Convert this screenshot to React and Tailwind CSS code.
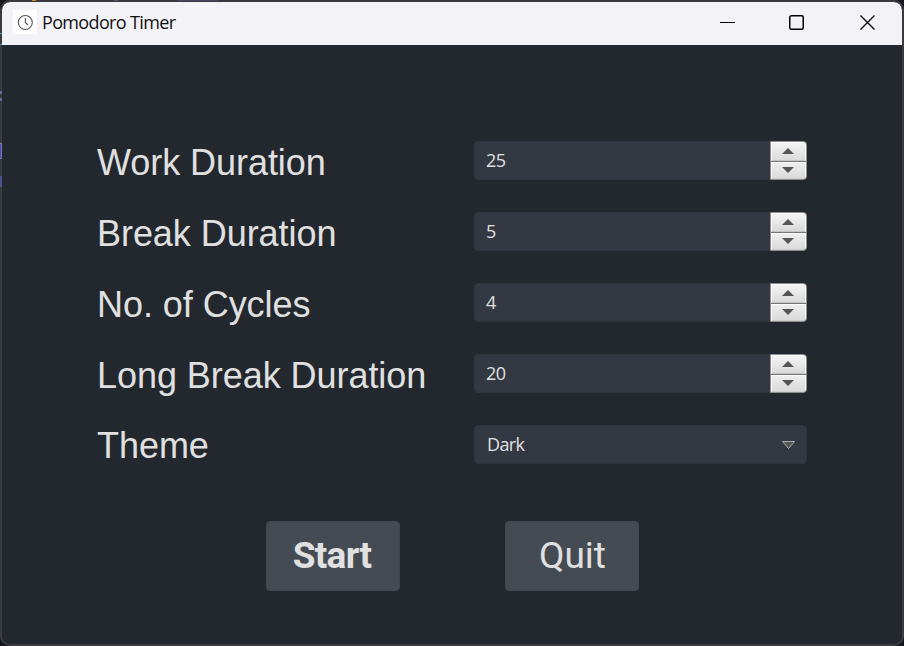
const ui = "font-['Open_Sans','Noto_Sans',sans-serif]";

function ClockIcon() {
  return (
    <div className="flex h-6 w-6 items-center justify-center bg-white">
      <svg width="24" height="24" viewBox="0 0 24 24" fill="none" stroke="#555" strokeWidth="1.1">
        <circle cx="12.3" cy="12.5" r="7" />
        <path d="M12.3 8V12.5L15 15" />
      </svg>
    </div>
  );
}

function TitleBar() {
  return (
    <header className="flex h-[43px] shrink-0 items-center rounded-t-lg bg-[#f2f2f7] pb-[3px] pl-[11px]">
      <ClockIcon />
      <h1 className={`ml-[5px] text-[18px] leading-6 tracking-[-0.65px] whitespace-nowrap text-[#111] ${ui}`}>
        Pomodoro Timer
      </h1>
      <div className="ml-auto flex pr-[26px]">
        <svg className="mr-[53px]" width="16" height="16" viewBox="0 0 16 16">
          <path d="M0 8.5H15" stroke="#000" strokeWidth="1" />
        </svg>
        <svg className="mr-[55px]" width="16" height="16" viewBox="0 0 16 16">
          <rect x="0.75" y="1.75" width="13.5" height="13.5" rx="1.5" fill="none" stroke="#000" strokeWidth="1.5" />
        </svg>
        <svg width="16" height="16" viewBox="0 0 16 16">
          <path d="M0.5 1.5L14.5 15.5M14.5 1.5L0.5 15.5" stroke="#000" strokeWidth="1.3" />
        </svg>
      </div>
    </header>
  );
}

function Stepper() {
  return (
    <div className="flex h-[39px] w-[37px] flex-col overflow-hidden rounded-r-[4px] border border-[#8e8e8e] bg-[#777]">
      <button className="flex h-[19px] items-center justify-center border border-[#fafafa] border-b-[#c4c4c4] bg-linear-to-b from-[#f4f4f4] to-[#dadada] pr-px pb-px">
        <svg width="12" height="6" viewBox="0 0 12 6">
          <path d="M0 6L6 0L12 6Z" fill="#555" />
        </svg>
      </button>
      <button className="mt-px flex h-[17px] items-center justify-center border border-[#fafafa] border-b-[#d0d0d0] bg-linear-to-b from-[#eee] to-[#dadada] pr-px pb-px">
        <svg width="12" height="6" viewBox="0 0 12 6">
          <path d="M0 0L6 6L12 0Z" fill="#555" />
        </svg>
      </button>
    </div>
  );
}

function Row({ label, children }) {
  return (
    <div className="flex h-[39px] items-center">
      <div className="w-[377px] pt-1 font-['Liberation_Sans',sans-serif] text-[36px] leading-10 tracking-[-0.05px] whitespace-nowrap text-[#e0e0e0]">
        {label}
      </div>
      <div className={`flex h-[39px] w-[333px] items-center rounded-[4px] border border-[#30343d] bg-[#343842] text-[18px] tracking-[-0.6px] text-[#e0e0e0] ${ui}`}>
        {children}
      </div>
    </div>
  );
}

function SpinRow({ label, value }) {
  return (
    <Row label={label}>
      <span className="ml-[11px] flex-1">{value}</span>
      <div className="-mr-px">
        <Stepper />
      </div>
    </Row>
  );
}

/* Slivers of the editor that show past the window's edges. */
function BackdropSlivers() {
  return (
    <div className="pointer-events-none absolute inset-0">
      <div className="absolute top-0 left-[32px] h-px w-1 bg-[#c98a2c]" />
      <div className="absolute top-0 left-[114px] h-px w-1 bg-[#6a4d78]" />
      <div className="absolute top-0 left-[178px] h-px w-10 bg-[#43465c]" />
      <div className="absolute top-[33px] left-0 h-px w-0.5 bg-[#4a9cc0]" />
      <div className="absolute top-[44px] left-0 h-px w-0.5 bg-[#4a9cc0]" />
      <div className="absolute top-[91px] left-0 h-[3px] w-0.5 bg-[#6a68a8]" />
      <div className="absolute top-[98px] left-0 h-[3px] w-0.5 bg-[#6a68a8]" />
      <div className="absolute top-[143px] left-0 h-4 w-0.5 border-y border-r border-[#8a6fa8] bg-[#3d55a8]" />
      <div className="absolute top-[176px] left-0 h-[11px] w-0.5 bg-[#4c5290]" />
    </div>
  );
}

export default function App() {
  return (
    <div className="relative h-[646px] w-[904px] overflow-hidden bg-[#17181d]">
      <div className="flex h-[646px] w-[904px] flex-col overflow-hidden rounded-[10px] border-2 border-[#3b3b3f] bg-[#23282f]">
        <TitleBar />
        <main className="flex flex-col pt-24 pl-[95px]">
          <div className="flex flex-col gap-8">
            <SpinRow label="Work Duration" value="25" />
            <SpinRow label="Break Duration" value="5" />
            <SpinRow label="No. of Cycles" value="4" />
            <SpinRow label="Long Break Duration" value="20" />
            <Row label={<span className="-mt-0.5 block">Theme</span>}>
              <span className="ml-3 flex-1">Dark</span>
              <svg className="mt-0.5 mr-[11px]" width="13" height="9" viewBox="0 0 13 9">
                <path d="M0.5 0.5H12.5L6.5 7.5Z" fill="#555" stroke="#aaa" strokeWidth="1" />
              </svg>
            </Row>
          </div>
          <div className="mt-[57px] ml-[169px] flex gap-[105px] font-[Roboto,sans-serif] text-[37px] text-[#e0e0e0]">
            <button className="h-[70px] w-[134px] rounded-[4px] border border-[#41474e] bg-[#444b52] pr-0.5 font-bold tracking-[-0.7px]">
              Start
            </button>
            <button className="h-[70px] w-[134px] rounded-[4px] border border-[#41474e] bg-[#444b52] pl-px">
              Quit
            </button>
          </div>
        </main>
      </div>
      <BackdropSlivers />
    </div>
  );
}
